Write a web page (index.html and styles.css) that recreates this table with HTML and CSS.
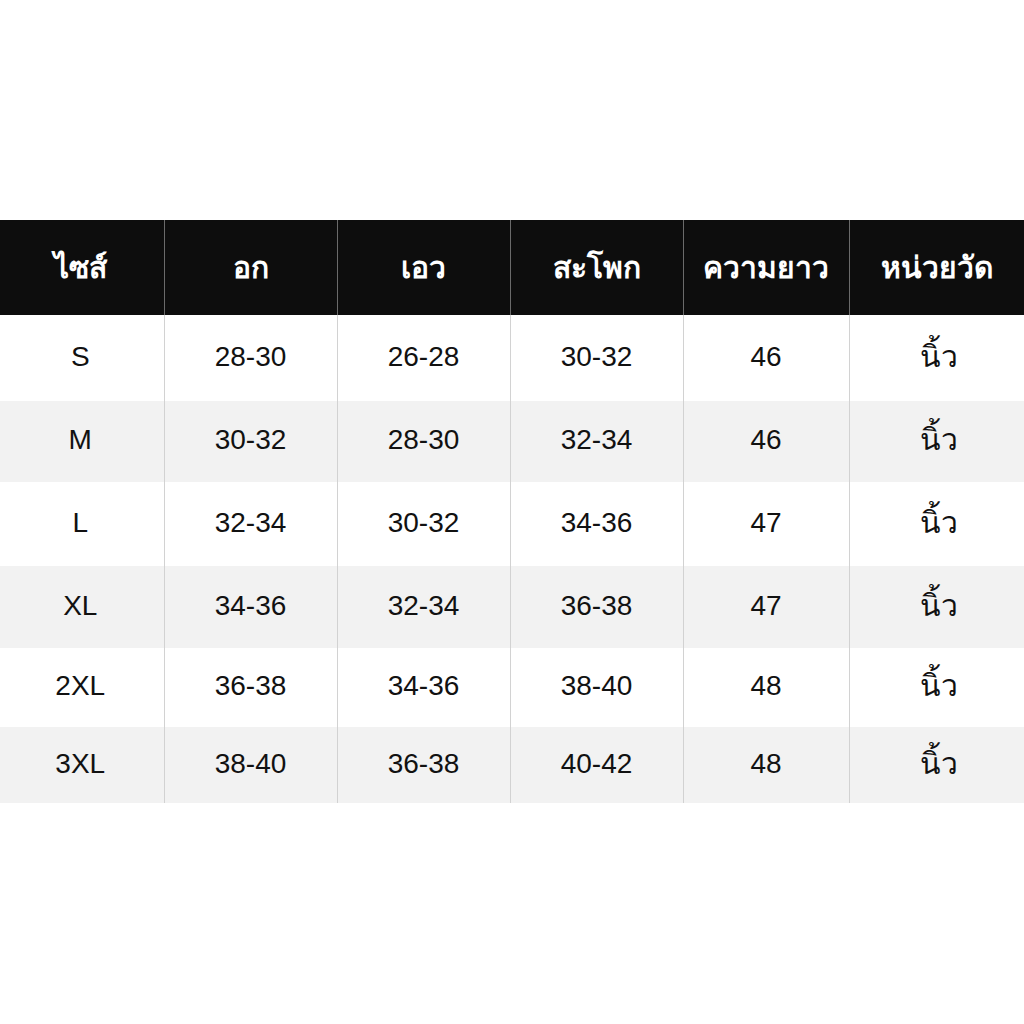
FILE: index.html
```html
<!DOCTYPE html>
<html lang="th">
<head>
<meta charset="utf-8">
<link rel="stylesheet" href="styles.css">
</head>
<body>
<div class="page">
  <table class="sizes">
    <colgroup>
      <col class="c1"><col class="c2"><col class="c3"><col class="c4"><col class="c5"><col class="c6">
    </colgroup>
    <thead>
      <tr><th>ไซส์</th><th>อก</th><th>เอว</th><th>สะโพก</th><th>ความยาว</th><th>หน่วยวัด</th></tr>
    </thead>
    <tbody>
      <tr class="r1"><td>S</td><td>28-30</td><td>26-28</td><td>30-32</td><td>46</td><td class="th">นิ้ว</td></tr>
      <tr class="r2 alt"><td>M</td><td>30-32</td><td>28-30</td><td>32-34</td><td>46</td><td class="th">นิ้ว</td></tr>
      <tr class="r3"><td>L</td><td>32-34</td><td>30-32</td><td>34-36</td><td>47</td><td class="th">นิ้ว</td></tr>
      <tr class="r4 alt"><td>XL</td><td>34-36</td><td>32-34</td><td>36-38</td><td>47</td><td class="th">นิ้ว</td></tr>
      <tr class="r5"><td>2XL</td><td>36-38</td><td>34-36</td><td>38-40</td><td>48</td><td class="th">นิ้ว</td></tr>
      <tr class="r6 alt"><td>3XL</td><td>38-40</td><td>36-38</td><td>40-42</td><td>48</td><td class="th">นิ้ว</td></tr>
    </tbody>
  </table>
</div>
</body>
</html>
```
FILE: styles.css
```css
html, body { margin: 0; padding: 0; background: #ffffff; }
.page { width: 1024px; height: 1024px; padding-top: 220px; box-sizing: border-box; }
.sizes {
  width: 1024px;
  border-collapse: collapse;
  table-layout: fixed;
  font-family: "Liberation Sans", Arial, "Noto Sans", sans-serif;
}
.c1 { width: 164px; }
.c2 { width: 173px; }
.c3 { width: 173px; }
.c4 { width: 173px; }
.c5 { width: 166px; }
.c6 { width: 175px; }
.sizes th {
  background: #0d0d0d;
  color: #ffffff;
  height: 95px;
  padding: 0;
  font-weight: bold;
  font-size: 30px;
  text-align: center;
  vertical-align: middle;
  border-left: 1px solid #6a6a6a;
  font-family: Tahoma, "DejaVu Sans", "Noto Sans", sans-serif;
}
.sizes th:first-child, .sizes td:first-child { border-left: none; }
.sizes th:first-child { padding-right: 2px; }
.sizes td {
  padding: 0 0 3px 0;
  font-size: 28px;
  line-height: 32px;
  color: #111111;
  text-align: center;
  vertical-align: middle;
  border-left: 1px solid #d2d2d2;
}
.sizes td:first-child { padding-right: 3px; }
.sizes td.th { font-family: Tahoma, "DejaVu Sans", "Noto Sans", sans-serif; font-size: 30px; padding-left: 4px; }
.sizes tr.alt td { background: #f2f2f2; }
.r1 td { height: 83px; }
.r2 td { height: 78px; }
.r3 td { height: 81px; }
.r4 td { height: 79px; }
.r5 td { height: 76px; }
.r6 td { height: 73px; }
```
